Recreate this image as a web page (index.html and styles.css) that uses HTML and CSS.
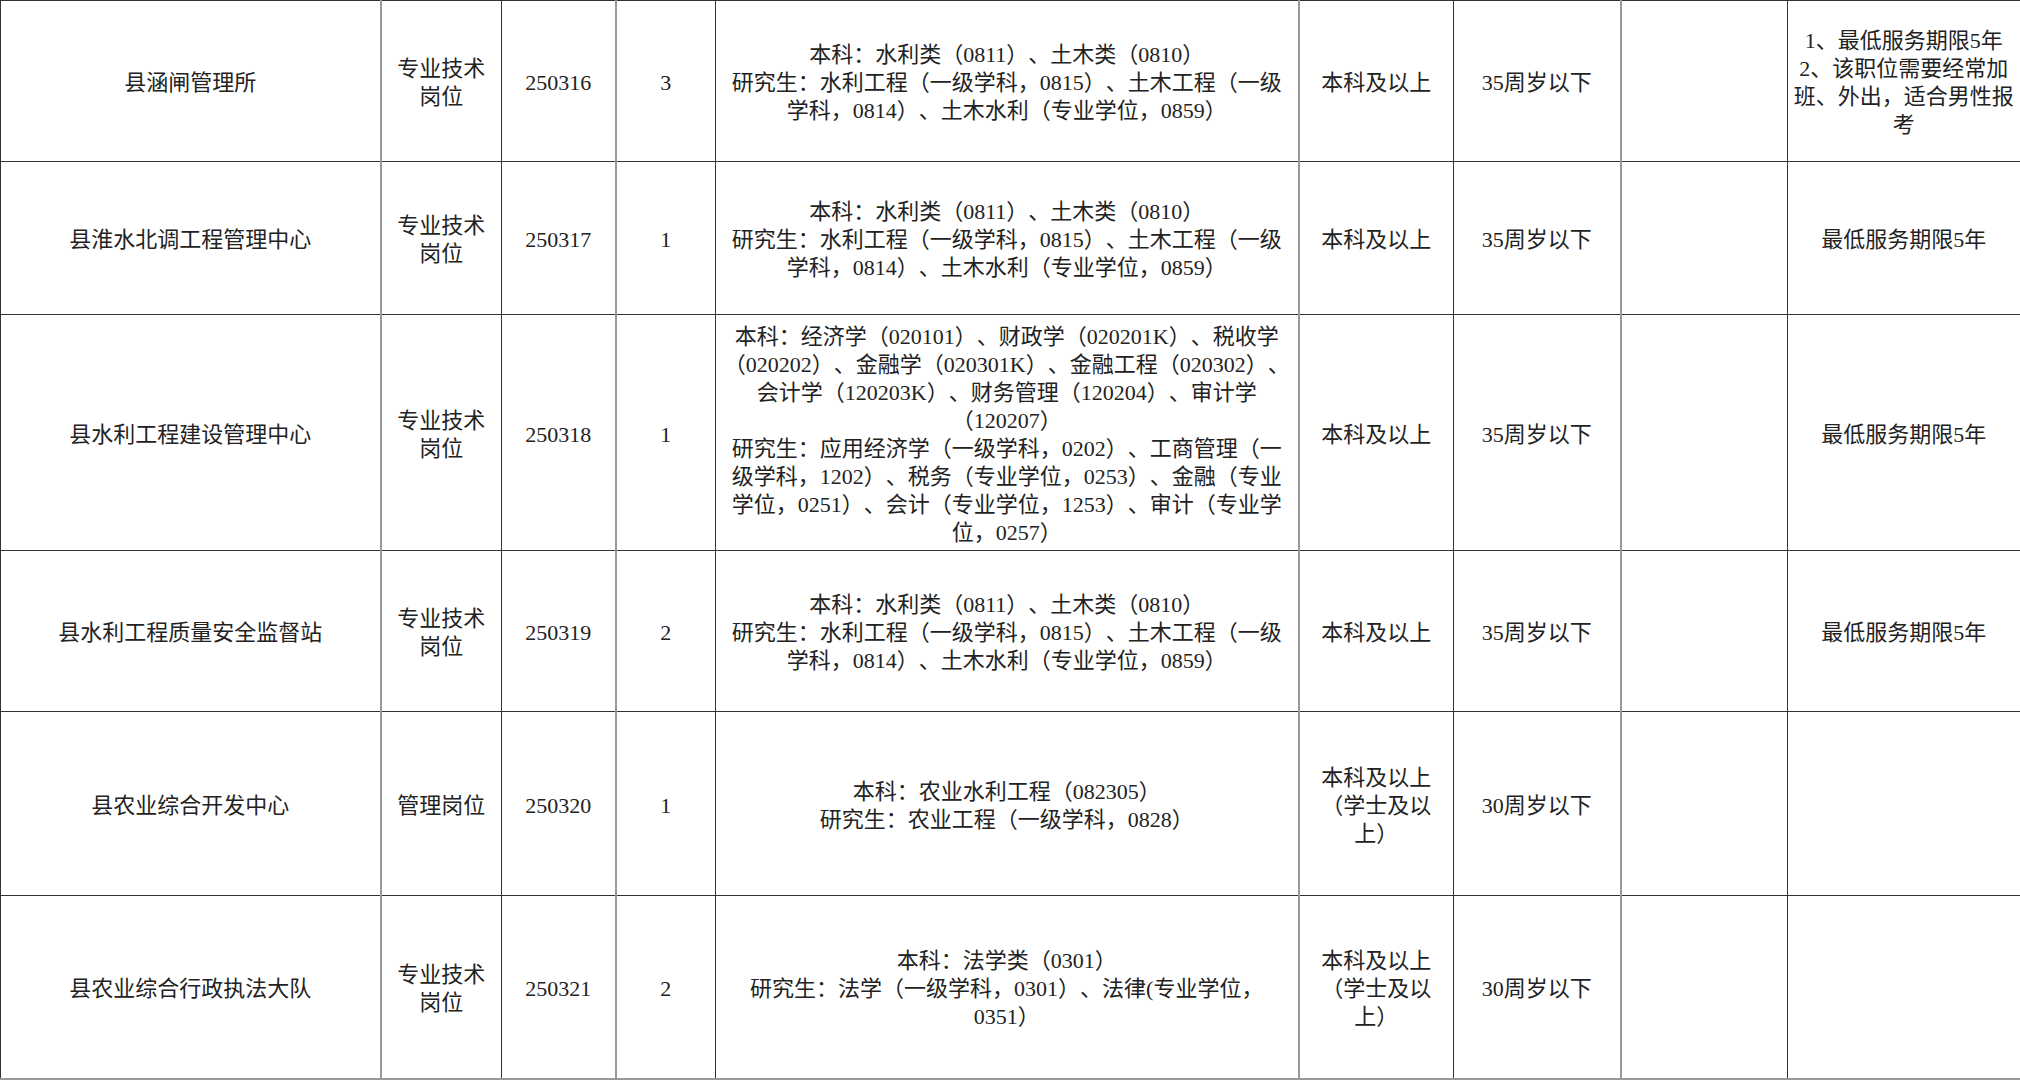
FILE: index.html
```html
<!DOCTYPE html>
<html lang="zh-CN">
<head>
<meta charset="utf-8">
<title>岗位表</title>
<link rel="stylesheet" href="styles.css">
</head>
<body>
<table class="grid">
  <colgroup>
    <col class="c-unit">
    <col class="c-type">
    <col class="c-code">
    <col class="c-num">
    <col class="c-major">
    <col class="c-edu">
    <col class="c-age">
    <col class="c-other">
    <col class="c-note">
  </colgroup>
  <tbody>
    <tr class="r1">
      <td>县涵闸管理所</td>
      <td class="g">专业技术<br>岗位</td>
      <td>250316</td>
      <td class="g">3</td>
      <td>本科：水利类（0811）、土木类（0810）<br>研究生：水利工程（一级学科，0815）、土木工程（一级<br>学科，0814）、土木水利（专业学位，0859）</td>
      <td class="g">本科及以上</td>
      <td>35周岁以下</td>
      <td class="g"></td>
      <td class="last">1、最低服务期限5年<br>2、该职位需要经常加<br>班、外出，适合男性报<br>考</td>
    </tr>
    <tr class="r2">
      <td>县淮水北调工程管理中心</td>
      <td class="g">专业技术<br>岗位</td>
      <td>250317</td>
      <td class="g">1</td>
      <td>本科：水利类（0811）、土木类（0810）<br>研究生：水利工程（一级学科，0815）、土木工程（一级<br>学科，0814）、土木水利（专业学位，0859）</td>
      <td class="g">本科及以上</td>
      <td>35周岁以下</td>
      <td class="g"></td>
      <td class="last">最低服务期限5年</td>
    </tr>
    <tr class="r3">
      <td>县水利工程建设管理中心</td>
      <td class="g">专业技术<br>岗位</td>
      <td>250318</td>
      <td class="g">1</td>
      <td>本科：经济学（020101）、财政学（020201K）、税收学<br>（020202）、金融学（020301K）、金融工程（020302）、<br>会计学（120203K）、财务管理（120204）、审计学<br>（120207）<br>研究生：应用经济学（一级学科，0202）、工商管理（一<br>级学科，1202）、税务（专业学位，0253）、金融（专业<br>学位，0251）、会计（专业学位，1253）、审计（专业学<br>位，0257）</td>
      <td class="g">本科及以上</td>
      <td>35周岁以下</td>
      <td class="g"></td>
      <td class="last">最低服务期限5年</td>
    </tr>
    <tr class="r4">
      <td>县水利工程质量安全监督站</td>
      <td class="g">专业技术<br>岗位</td>
      <td>250319</td>
      <td class="g">2</td>
      <td>本科：水利类（0811）、土木类（0810）<br>研究生：水利工程（一级学科，0815）、土木工程（一级<br>学科，0814）、土木水利（专业学位，0859）</td>
      <td class="g">本科及以上</td>
      <td>35周岁以下</td>
      <td class="g"></td>
      <td class="last">最低服务期限5年</td>
    </tr>
    <tr class="r5">
      <td>县农业综合开发中心</td>
      <td class="g">管理岗位</td>
      <td>250320</td>
      <td class="g">1</td>
      <td>本科：农业水利工程（082305）<br>研究生：农业工程（一级学科，0828）</td>
      <td class="g">本科及以上<br>（学士及以<br>上）</td>
      <td>30周岁以下</td>
      <td class="g"></td>
      <td class="last"></td>
    </tr>
    <tr class="r6">
      <td>县农业综合行政执法大队</td>
      <td class="g">专业技术<br>岗位</td>
      <td>250321</td>
      <td class="g">2</td>
      <td>本科：法学类（0301）<br>研究生：法学（一级学科，0301）、法律(专业学位，<br>0351）</td>
      <td class="g">本科及以上<br>（学士及以<br>上）</td>
      <td>30周岁以下</td>
      <td class="g"></td>
      <td class="last"></td>
    </tr>
  </tbody>
</table>
</body>
</html>
```

FILE: styles.css
```css
html, body {
  margin: 0;
  padding: 0;
  background: #ffffff;
}

.grid {
  width: 2020px;
  table-layout: fixed;
  border-collapse: collapse;
  font-family: "Liberation Serif", "Noto Sans CJK SC", serif;
  font-size: 22px;
  line-height: 28px;
  color: #222222;
  text-spacing-trim: space-all;
}

.c-unit { width: 380px; }
.c-type { width: 121px; }
.c-code { width: 114px; }
.c-num { width: 100px; }
.c-major { width: 583px; }
.c-edu { width: 155px; }
.c-age { width: 167px; }
.c-other { width: 167px; }
.c-note { width: 233px; }

.grid td {
  border: 1px solid #333333;
  padding: 4px 0 0 0;
  text-align: center;
  vertical-align: middle;
  white-space: nowrap;
  overflow: hidden;
}

.grid td.g {
  border-left: 2px solid #9a9a9a;
}

.grid td.last {
  border-right: 2px solid #9a9a9a;
}

.grid tr.r6 td {
  border-bottom: 2px solid #9a9a9a;
}

.r1 { height: 161px; }
.r2 { height: 153px; }
.r3 { height: 236px; }
.r4 { height: 161px; }
.r5 { height: 184px; }
.r6 { height: 183px; }
```
